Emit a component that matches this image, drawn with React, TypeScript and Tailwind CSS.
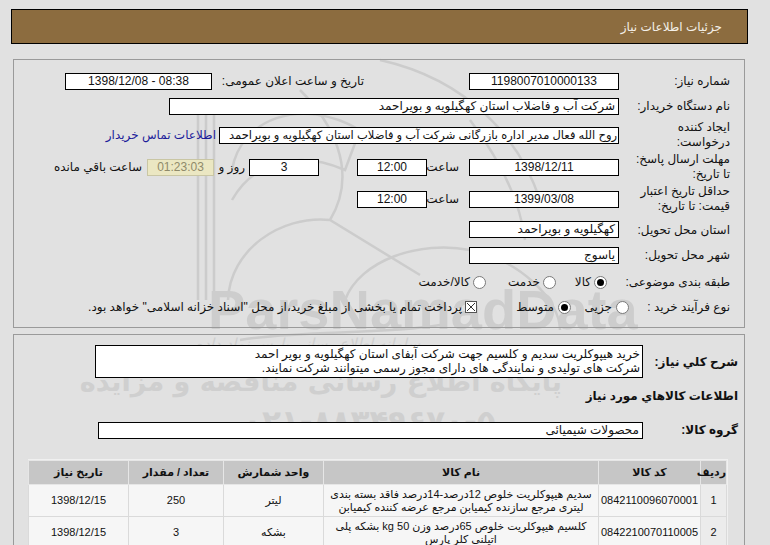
import React from "react";

function Box({
  w,
  children,
  align = "right",
  ltr = false,
  className = "",
}: {
  w: string;
  children?: React.ReactNode;
  align?: "right" | "center";
  ltr?: boolean;
  className?: string;
}) {
  return (
    <div
      dir={ltr ? "ltr" : undefined}
      className={`${w} h-[17px] shrink-0 overflow-hidden whitespace-nowrap border border-black bg-white px-[3px] leading-[15px] ${
        align === "center" ? "text-center" : "text-right"
      } ${className}`}
    >
      {children}
    </div>
  );
}

function Radio({ checked }: { checked?: boolean }) {
  return (
    <span className="flex h-[13px] w-[13px] shrink-0 items-center justify-center rounded-full border border-[#7a7a7a] bg-white">
      {checked && <span className="h-[7px] w-[7px] rounded-full bg-black" />}
    </span>
  );
}

function Watermark() {
  return (
    <div className="pointer-events-none absolute inset-0 z-0 select-none">
      <svg className="absolute left-0 top-0" width="770" height="545" fill="none" stroke="#cccccc" strokeWidth="2.5">
        <path d="M198 100 L198 300 M206 100 L206 300 M214 100 L214 300" />
        <path d="M232 170 C 240 120, 300 95, 360 130 L 345 170 C 300 150, 255 160, 232 200" />
        <path d="M228 300 C 230 250, 280 215, 330 220 L 420 275 M 330 220 C 360 170, 330 120, 300 90" />
        <path d="M345 300 C 360 260, 420 240, 470 250 C 520 260, 560 300, 560 330" />
        <path d="M380 60 C 470 80, 520 140, 540 200 M 470 120 C 500 160, 520 200, 525 240" />
        <path d="M240 340 C 300 330, 380 335, 440 325" />
      </svg>
      <div dir="ltr" className="absolute left-[208px] top-[282px] whitespace-nowrap font-['Liberation_Sans'] text-[56px] font-bold leading-none text-[#cdcdcd]">
        ParsNamadData
      </div>
      <div className="absolute right-[350px] top-[333px] whitespace-nowrap font-['DejaVu_Sans'] text-[15px] italic text-[#cfcfcf]">
        سامانه اطلاع رسانی پارس نماد داده
      </div>
      <div className="absolute right-[208px] top-[368px] whitespace-nowrap font-['DejaVu_Sans'] text-[27px] font-bold leading-none text-[#cfcfcf]">
        پایگاه اطلاع رسانی مناقصه و مزایده
      </div>
      <div dir="ltr" className="absolute left-[243px] top-[406px] whitespace-nowrap font-['DejaVu_Sans'] text-[31px] font-bold leading-none text-[#cfcfcf]">
        ۰۲۱-۸۸۳۴۹۶۷۰-۵
      </div>
    </div>
  );
}

export default function App() {
  return (
    <div
      dir="rtl"
      className="relative h-[545px] w-[770px] overflow-hidden bg-[#e1e1e1] font-['Liberation_Sans','DejaVu_Sans',sans-serif] text-[12px] text-[#111]"
    >
      <Watermark />
      <div className="relative z-10 pt-[9px]">
        {/* header */}
        <div className="ml-[11px] mr-[22px] flex h-[35px] items-center border border-black bg-[#8c6c3f] pr-[25px] text-[12px] text-[#f4f0e8]">
          جزئیات اطلاعات نیاز
        </div>

        {/* panel 1 */}
        <div className="ml-[13px] mr-[25px] mt-[15px] border border-[#9a9a9a] pb-[11px] pr-[14px] pt-[9px]">
          <div className="flex h-[24px] items-center">
            <div className="w-[111px] shrink-0">شماره نیاز:</div>
            <Box w="w-[150px]" align="center" ltr>
              1198007010000133
            </Box>
            <div className="w-[105px] shrink-0" />
            <div className="w-[152px] shrink-0 whitespace-nowrap">تاریخ و ساعت اعلان عمومی:</div>
            <Box w="w-[147px]" align="center" ltr>
              1398/12/08 - 08:38
            </Box>
          </div>

          <div className="flex h-[26px] items-center">
            <div className="w-[111px] shrink-0">نام دستگاه خریدار:</div>
            <Box w="w-[450px]">شرکت آب و فاضلاب استان کهگیلویه و بویراحمد</Box>
          </div>

          <div className="flex h-[32px] items-center">
            <div className="w-[111px] shrink-0 leading-[15px]">
              ایجاد کننده
              <br />
              درخواست:
            </div>
            <Box w="w-[400px]" className="!px-[1px] text-[11.5px]">
              روح الله فعال مدیر اداره بازرگانی شرکت آب و فاضلاب استان کهگیلویه و بویراحمد
            </Box>
            <span className="mr-[3px] whitespace-nowrap text-[#1c1c9a]">اطلاعات تماس خریدار</span>
          </div>

          <div className="flex h-[32px] items-center">
            <div className="w-[111px] shrink-0 leading-[15px]">
              مهلت ارسال پاسخ:
              <br />
              تا تاریخ:
            </div>
            <Box w="w-[150px]" align="center" ltr>
              1398/12/11
            </Box>
            <div className="w-[42px] shrink-0 pr-[10px]">ساعت</div>
            <Box w="w-[70px]" align="center" ltr>
              12:00
            </Box>
            <div className="w-[38px] shrink-0" />
            <Box w="w-[70px]" align="center">
              3
            </Box>
            <div className="w-[35px] shrink-0 pr-[4px]">روز و</div>
            <Box w="w-[67px]" align="center" ltr className="!border-[#c9c6a4] !bg-[#ebe7c2] text-[#8f8a6a]">
              01:23:03
            </Box>
            <div className="shrink-0 whitespace-nowrap pr-[5px]">ساعت باقي مانده</div>
          </div>

          <div className="flex h-[32px] items-center">
            <div className="w-[111px] shrink-0 leading-[15px]">
              حداقل تاریخ اعتبار
              <br />
              قیمت: تا تاریخ:
            </div>
            <Box w="w-[150px]" align="center" ltr>
              1399/03/08
            </Box>
            <div className="w-[42px] shrink-0 pr-[10px]">ساعت</div>
            <Box w="w-[70px]" align="center" ltr>
              12:00
            </Box>
          </div>

          <div className="flex h-[29px] items-center">
            <div className="w-[111px] shrink-0">استان محل تحویل:</div>
            <Box w="w-[150px]">کهگیلویه و بویراحمد</Box>
          </div>

          <div className="flex h-[22px] items-center">
            <div className="w-[111px] shrink-0">شهر محل تحویل:</div>
            <Box w="w-[150px]">یاسوج</Box>
          </div>

          <div className="flex h-[32px] items-center">
            <div className="w-[123px] shrink-0 whitespace-nowrap">طبقه بندی موضوعی:</div>
            <div className="flex w-[51px] shrink-0 items-center gap-[3px]">
              <Radio checked />
              <span>کالا</span>
            </div>
            <div className="flex w-[70px] shrink-0 items-center gap-[3px]">
              <Radio />
              <span>خدمت</span>
            </div>
            <div className="flex shrink-0 items-center gap-[3px]">
              <Radio />
              <span>کالا/خدمت</span>
            </div>
          </div>

          <div className="flex h-[18px] items-center">
            <div className="w-[101px] shrink-0 whitespace-nowrap">نوع فرآیند خرید :</div>
            <div className="flex w-[58px] shrink-0 items-center gap-[4px]">
              <Radio />
              <span>جزیی</span>
            </div>
            <div className="flex w-[94px] shrink-0 items-center gap-[4px]">
              <Radio checked />
              <span>متوسط</span>
            </div>
            <div className="flex shrink-0 items-center gap-[3px] whitespace-nowrap">
              <svg width="12" height="12" viewBox="0 0 12 12" className="shrink-0">
                <rect x="0.5" y="0.5" width="11" height="11" fill="#fff" stroke="#555" />
                <path d="M2 2 L10 10 M10 2 L2 10" stroke="#333" strokeWidth="1" />
              </svg>
              <span>پرداخت تمام یا بخشی از مبلغ خرید،از محل "اسناد خزانه اسلامی" خواهد بود.</span>
            </div>
          </div>
        </div>

        {/* panel 2 */}
        <div className="ml-[13px] mr-[25px] mt-[6px] h-[240px] border border-[#9a9a9a] pr-[6px] pt-[10px]">
          <div className="flex items-center">
            <div className="w-[95px] shrink-0 whitespace-nowrap text-[12px] font-bold">شرح کلي نیاز:</div>
            <div className="h-[33px] w-[548px] shrink-0 overflow-hidden whitespace-nowrap border border-black bg-white px-[2px] pt-[1px] text-[12px] leading-[14px]">
              خرید هیپوکلریت سدیم و کلسیم جهت شرکت آبفای استان کهگیلویه و بویر احمد
              <br />
              شرکت های تولیدی و نمایندگی های دارای مجوز رسمی میتوانند شرکت نمایند.
            </div>
          </div>

          <div className="mt-[10px] h-[16px] whitespace-nowrap text-[12px] font-bold leading-[16px]">
            اطلاعات کالاهاي مورد نیاز
          </div>

          <div className="mt-[17px] flex items-center">
            <div className="w-[95px] shrink-0 whitespace-nowrap text-[12px] font-bold">گروه کالا:</div>
            <Box w="w-[545px]">محصولات شیمیائی</Box>
          </div>

          <div className="mr-[10px] mt-[20px] w-[700px] border border-[#f0f0f0]">
            <table className="w-[698px] table-fixed border-collapse text-center text-[11px]">
              <colgroup>
                <col className="w-[26px]" />
                <col className="w-[102px]" />
                <col className="w-[275px]" />
                <col className="w-[100px]" />
                <col className="w-[95px]" />
                <col className="w-[100px]" />
              </colgroup>
              <thead>
                <tr className="h-[24px] bg-[#c6c6c6] font-bold">
                  <th className="border border-[#e6e6e6]">ردیف</th>
                  <th className="border border-[#e6e6e6]">کد کالا</th>
                  <th className="border border-[#e6e6e6]">نام کالا</th>
                  <th className="border border-[#e6e6e6]">واحد شمارش</th>
                  <th className="border border-[#e6e6e6]">تعداد / مقدار</th>
                  <th className="border border-[#e6e6e6]">تاریخ نیاز</th>
                </tr>
              </thead>
              <tbody>
                <tr className="h-[32px] bg-[#f6f6f6]">
                  <td className="border border-[#dadada] bg-[#ececec]">1</td>
                  <td className="border border-[#dadada]">0842110096070001</td>
                  <td className="whitespace-nowrap border border-[#dadada] leading-[13px]">
                    سدیم هیپوکلریت خلوص 12درصد-14درصد فاقد بسته بندی
                    <br />
                    لیتری مرجع سازنده کیمیابن مرجع عرضه کننده کیمیابن
                  </td>
                  <td className="border border-[#dadada]">لیتر</td>
                  <td className="border border-[#dadada]">250</td>
                  <td className="border border-[#dadada]">1398/12/15</td>
                </tr>
                <tr className="h-[32px] bg-[#f6f6f6]">
                  <td className="border border-[#dadada] bg-[#ececec]">2</td>
                  <td className="border border-[#dadada]">0842210070110005</td>
                  <td className="whitespace-nowrap border border-[#dadada] leading-[13px]">
                    کلسیم هیپوکلریت خلوص 65درصد وزن 50 kg بشکه پلی
                    <br />
                    اتیلنی کلر پارس
                  </td>
                  <td className="border border-[#dadada]">بشکه</td>
                  <td className="border border-[#dadada]">3</td>
                  <td className="border border-[#dadada]">1398/12/15</td>
                </tr>
              </tbody>
            </table>
          </div>
        </div>
      </div>
    </div>
  );
}
